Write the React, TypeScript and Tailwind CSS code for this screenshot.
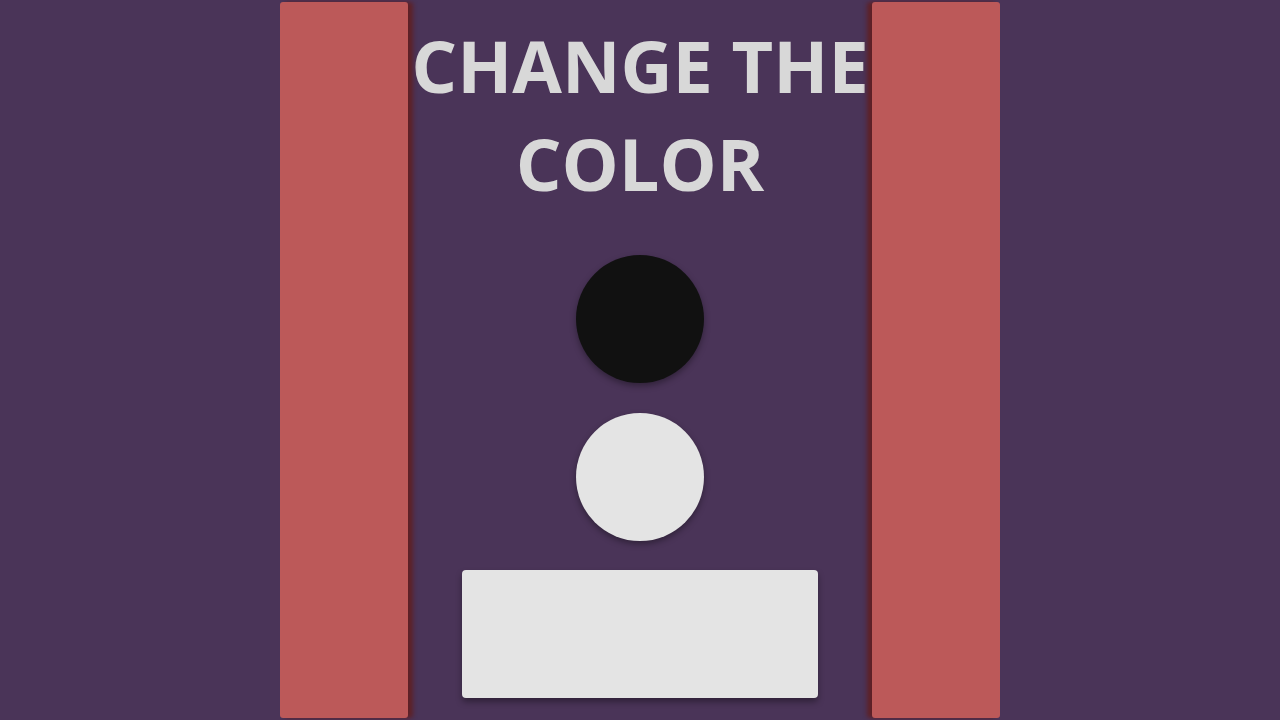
// Colour-switch screen: two side rails, a heading, two swatches and a panel.

const RAIL =
  "w-[128px] h-[716px] my-[2px] rounded-[3px] bg-[#bc5959]";

export default function App() {
  return (
    <div className="w-[1280px] h-[720px] bg-[#4a3458] flex justify-center overflow-hidden">
      <div className={`${RAIL} relative z-10 shadow-[5px_0_4px_rgba(95,32,36,0.95)]`} />

      <main className="w-[464px] flex flex-col items-center">
        <h1 className="pt-[16px] text-center text-[72px] leading-[98px] font-bold text-[#d8d8d8] font-['Open_Sans',sans-serif] whitespace-nowrap">
          CHANGE THE
          <br />
          COLOR
        </h1>

        {/* swatches */}
        <button className="mt-[43px] w-[128px] h-[128px] rounded-full bg-[#111111] shadow-[0_3px_6px_rgba(0,0,0,0.35)]" />
        <button className="mt-[30px] w-[128px] h-[128px] rounded-full bg-[#e4e4e4] shadow-[0_3px_6px_rgba(0,0,0,0.35)]" />

        {/* preview panel */}
        <div className="mt-[29px] w-[356px] h-[128px] rounded-[4px] bg-[#e4e4e4] shadow-[0_4px_6px_rgba(0,0,0,0.35)]" />
      </main>

      <div className={`${RAIL} relative z-10 shadow-[-5px_0_4px_rgba(95,32,36,0.95)]`} />
    </div>
  );
}
